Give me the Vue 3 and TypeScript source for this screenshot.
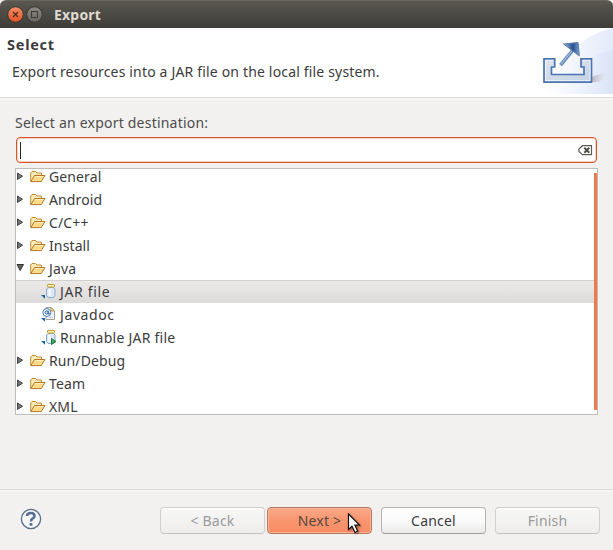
<script setup lang="ts">
interface TreeRow {
  label: string
  kind: 'folder' | 'jar' | 'javadoc' | 'runnable'
  open?: boolean
  selected?: boolean
}

const rows: TreeRow[] = [
  { label: 'General', kind: 'folder' },
  { label: 'Android', kind: 'folder' },
  { label: 'C/C++', kind: 'folder' },
  { label: 'Install', kind: 'folder' },
  { label: 'Java', kind: 'folder', open: true },
  { label: 'JAR file', kind: 'jar', selected: true },
  { label: 'Javadoc', kind: 'javadoc' },
  { label: 'Runnable JAR file', kind: 'runnable' },
  { label: 'Run/Debug', kind: 'folder' },
  { label: 'Team', kind: 'folder' },
  { label: 'XML', kind: 'folder' },
]
</script>

<template>
  <div class="window">
    <div class="titlebar">
      <svg class="controls" width="38" height="20" viewBox="0 0 38 20">
        <defs>
          <linearGradient id="closeFill" x1="0" y1="0" x2="0" y2="1">
            <stop offset="0" stop-color="#f58e69" /><stop offset="1" stop-color="#e35425" />
          </linearGradient>
          <linearGradient id="maxFill" x1="0" y1="0" x2="0" y2="1">
            <stop offset="0" stop-color="#8b8981" /><stop offset="1" stop-color="#66645d" />
          </linearGradient>
        </defs>
        <circle cx="9.5" cy="10.5" r="7.8" fill="url(#closeFill)" stroke="#34332e" />
        <path d="M7 8l5 5M12 8l-5 5" stroke="#4c2b1c" stroke-width="1.3" />
        <circle cx="28.5" cy="10.5" r="7.8" fill="url(#maxFill)" stroke="#34332e" />
        <rect x="25.5" y="7.5" width="6" height="6" fill="none" stroke="#3b3a35" />
      </svg>
      <span class="title">Export</span>
    </div>

    <div class="header">
      <div class="header-text">
        <div class="heading">Select</div>
        <div class="desc">Export resources into a JAR file on the local file system.</div>
      </div>
      <svg class="banner" width="78" height="66" viewBox="0 0 78 66">
        <defs>
          <linearGradient id="wash" x1="0" y1="0" x2="1" y2="0">
            <stop offset="0" stop-color="#fff" /><stop offset="1" stop-color="#e3eaf9" />
          </linearGradient>
          <linearGradient id="wash2" x1="0" y1="0" x2="1" y2="0">
            <stop offset="0" stop-color="#f5f8fe" stop-opacity="0" /><stop offset="1" stop-color="#d4dff5" />
          </linearGradient>
          <linearGradient id="tray" x1="0" y1="0" x2="1" y2="1">
            <stop offset="0" stop-color="#dde5f0" /><stop offset="1" stop-color="#c5d2e4" />
          </linearGradient>
          <linearGradient id="arrow" x1="0" y1="0" x2="1" y2="0">
            <stop offset="0" stop-color="#9dbbdc" /><stop offset=".6" stop-color="#27508c" /><stop offset="1" stop-color="#7ea2cf" />
          </linearGradient>
          <linearGradient id="trayShadow" x1="0" y1="0" x2="1" y2="0">
            <stop offset="0" stop-color="#bfb5c4" /><stop offset="1" stop-color="#e6e5f2" stop-opacity="0" />
          </linearGradient>
        </defs>
        <path d="M8 66Q32 10 78 0V66Z" fill="url(#wash)" />
        <path d="M20 66Q40 30 78 22V66Z" fill="url(#wash2)" opacity=".6" />
        <path d="M57 54L57 49Q64 45 75 45L64 54Z" fill="url(#trayShadow)" />
        <path d="M9 30.800H19.700V39H16.500V46.500H49V39H46V30.800H56.500V54.200H9Z" fill="url(#tray)" stroke="#4a74b0" stroke-width="1.700" />
        <path d="M10.500 32.300H18.200M10.500 32.300V52.600H55V32.300H47.500" fill="none" stroke="#fff" stroke-opacity=".6" />
        <path d="M25.500 37.200L38 22" stroke="#5880b4" stroke-width="3.400" />
        <path d="M25.800 36.500L37 22.800" stroke="#a4bedc" stroke-width="1.200" />
        <path d="M28.500 16L43 14.500L44.300 27.800Z" fill="url(#arrow)" stroke="#5379ad" />
      </svg>
    </div>

    <div class="content">
      <label class="prompt">Select an export destination:</label>
      <div class="filter">
        <span class="caret"></span>
        <svg width="15" height="11" viewBox="0 0 15 11">
          <path d="M4.500 .700H13.500V9.700H4.500L.900 6.500V4Z" fill="#fff" stroke="#5b5b55" stroke-width="1.200" />
          <path d="M6.300 2.800L11.300 7.700M11.300 2.800L6.300 7.700" stroke="#4b4b46" stroke-width="1.900" />
        </svg>
      </div>
      <div class="tree">
        <div class="rows">
          <div
            v-for="row in rows"
            :key="row.label"
            class="row"
            :class="[row.kind, { selected: row.selected, child: row.kind !== 'folder' }]"
          >
            <svg v-if="row.kind === 'folder'" class="twisty" width="9" height="9" viewBox="0 0 9 9">
              <path v-if="row.open" d="M1 .500H7.500L4.200 6.500Z" fill="#5f5f5f" stroke="#373737" />
              <path v-else d="M1.500 1V7.500L6.500 4.200Z" fill="#777" stroke="#3f3f3f" />
            </svg>
            <svg v-if="row.kind === 'folder'" class="folder-icon" width="16" height="13" viewBox="0 0 16 13">
              <path d="M.700 11.500V3L2 1.500H5.500L7 3H11.500V5.500" fill="#fbeab4" stroke="#c18a3a" />
              <path d="M.800 11.600L4.500 5.500H15L11.200 11.600Z" fill="#fbdb88" stroke="#b5762a" />
              <path d="M5 6.500H13.300" stroke="#fff0bd" />
            </svg>
            <svg v-else class="leaf" width="17" height="17" viewBox="0 0 17 17">
              <template v-if="row.kind !== 'javadoc'">
                <path d="M7.500 4.500L5.500 6V12.500L7 14.500H12.500L14 12.500V6L12.500 4.500Z" fill="#dce8f6" stroke="#8ba9cb" />
                <path d="M8.500 6V12.500" stroke="#fff" stroke-width="2" />
                <rect x="6.500" y="1.500" width="7" height="2.500" rx=".5" fill="#fff2b0" stroke="#c49c38" />
              </template>
              <path v-if="row.kind === 'runnable'" d="M10.500 9.500V15.500L15 12.500Z" fill="#40a65a" stroke="#1f7f3f" />
              <template v-if="row.kind === 'javadoc'">
                <path d="M5 1.500H10L13.500 5V13.500H5Z" fill="#edf2fb" stroke="#a3a08f" />
                <path d="M10 1.500V5H13.500Z" fill="#f3dfa2" stroke="#bc9b4f" />
                <path d="M8 11.500H12" stroke="#c4d1e6" />
                <circle cx="5.800" cy="6.500" r="4" fill="#e9f3fc" stroke="#4f82b5" />
                <circle cx="5.600" cy="6.500" r="1.500" fill="none" stroke="#275e9b" />
                <path d="M7.200 4.700V7.800Q8.100 8.500 9.200 7.300" fill="none" stroke="#275e9b" />
              </template>
              <path d="M0 12H4V15.800Z" fill="#1767a5" />
            </svg>
            <span class="label">{{ row.label }}</span>
          </div>
        </div>
        <div class="scrollbar"></div>
      </div>
    </div>

    <div class="footer">
      <svg class="help" width="22" height="22" viewBox="0 0 22 22">
        <circle cx="11" cy="11" r="9.600" fill="#f7f8f9" stroke="#566e8c" stroke-width="1.300" />
        <path d="M7 8Q7 5 11 5Q14.500 5 14.500 8Q14.500 9.700 12.500 10.700Q11 11.500 11 13.500" fill="none" stroke="#586f94" stroke-width="2.600" />
        <rect x="9.500" y="15" width="3" height="2.700" rx=".8" fill="#586f94" />
      </svg>
      <button class="btn disabled back">&lt; Back</button>
      <button class="btn primary">Next &gt;</button>
      <button class="btn cancel">Cancel</button>
      <button class="btn disabled finish">Finish</button>
      <svg class="pointer" width="15" height="22" viewBox="0 0 15 22">
        <path d="M1.500 1V16.500L5 13.300L8 19.500L10.700 18.200L7.900 12.200H12.500Z" fill="#fff" stroke="#111" stroke-width="1.200" />
      </svg>
    </div>
  </div>
</template>

<style>
body { margin: 0; background: #f2f1f0; }
</style>

<style scoped>
* { box-sizing: border-box; }
.window {
  width: 613px;
  height: 550px;
  display: flex;
  flex-direction: column;
  overflow: hidden;
  background: #f2f1f0;
  color: #3c3c3c;
  font: 14px/20px "Noto Sans", "Open Sans", sans-serif;
}
.titlebar {
  height: 28px;
  flex: none;
  display: flex;
  align-items: center;
  padding: 0 6px;
  border-top: 1px solid #67655c;
  border-radius: 6px 6px 0 0;
  background: linear-gradient(#59574f, #3e3d39);
}
.controls { margin-top: -1px; }
.title { margin-left: 10px; color: #dfdbd2; font-weight: 700; font-size: 14px; letter-spacing: .2px; }
.header {
  height: 71px;
  flex: none;
  display: flex;
  justify-content: space-between;
  background: #fff;
  border-bottom: 1px solid #f8f8f7;
  box-shadow: inset 0 -1px #d9d8d7;
}
.header-text { padding: 6px 0 0 7px; }
.heading { font-weight: 700; font-size: 14.5px; letter-spacing: .75px; }
.desc { margin: 8px 0 0 5px; letter-spacing: .17px; }
.content { height: 390px; flex: none; padding: 14px 15px 0; }
.prompt { display: block; height: 20px; color: #4c4c4c; letter-spacing: .21px; }
.filter {
  height: 26px;
  margin: 4px 1px 0;
  padding: 0 3px 0 3px;
  display: flex;
  align-items: center;
  justify-content: space-between;
  background: #fff;
  border: 1px solid #d6562b;
  border-radius: 4px;
  box-shadow: inset 0 0 0 1px #fad1c0;
}
.caret { width: 1px; height: 17px; background: #222; }
.tree {
  height: 247px;
  margin-top: 5px;
  display: flex;
  border: 1px solid #bfbdba;
  background: #fff;
  overflow: hidden;
}
.rows { flex: 1; margin: -4px -3px 0 0; }
.row { height: 23px; display: flex; align-items: center; letter-spacing: .12px; }
.row.child { padding-left: 25px; }
.row.selected { border-top: 1px solid #d2d0ce; background: linear-gradient(#ebeae9, #dddbd9); }
.row.jar { letter-spacing: .65px; }
.row.runnable { letter-spacing: .24px; }
.row.javadoc { letter-spacing: .6px; }
.twisty { margin: 0 4px 0 0; }
.folder-icon { margin: 0 3px 0 1px; }
.row.child .leaf { margin-right: 2px; margin-top: -1px; }
.label { white-space: nowrap; }
.scrollbar { width: 3px; height: 237px; margin-top: 4px; background: #f27a48; z-index: 1; }
.footer {
  flex: 1;
  display: flex;
  align-items: flex-start;
  position: relative;
  padding: 17px 13px 0 20px;
  border-top: 1px solid #d9d8d7;
  box-shadow: inset 0 1px #fafaf9;
}
.help { margin-top: 1px; }
.btn {
  width: 105px;
  height: 27px;
  padding: 0;
  font: inherit;
  letter-spacing: .2px;
  color: #3c3c3c;
  border: 1px solid #b6b4b1;
  border-bottom-color: #9f9d9a;
  border-radius: 4px;
  background: linear-gradient(#fff, #fafafa 50%, #ebeae9);
  box-shadow: inset 0 1px #fff;
}
.back { margin-left: 118px; }
.primary {
  margin-left: 2px;
  color: #56483f;
  border-color: #b57b62;
  background: linear-gradient(#fbaa8a, #f8956f 50%, #f88d65);
  box-shadow: inset 0 0 0 1px #fcb499;
}
.cancel { margin-left: 9px; }
.finish { margin-left: 9px; }
.disabled {
  color: #9b9b9b;
  border-color: #d1cfcd;
  border-bottom-color: #c3c1bf;
  background: linear-gradient(#f7f7f6, #eeedec);
}
.pointer { position: absolute; left: 347px; top: 23px; filter: drop-shadow(1px 1px 1px #0006); }
</style>
